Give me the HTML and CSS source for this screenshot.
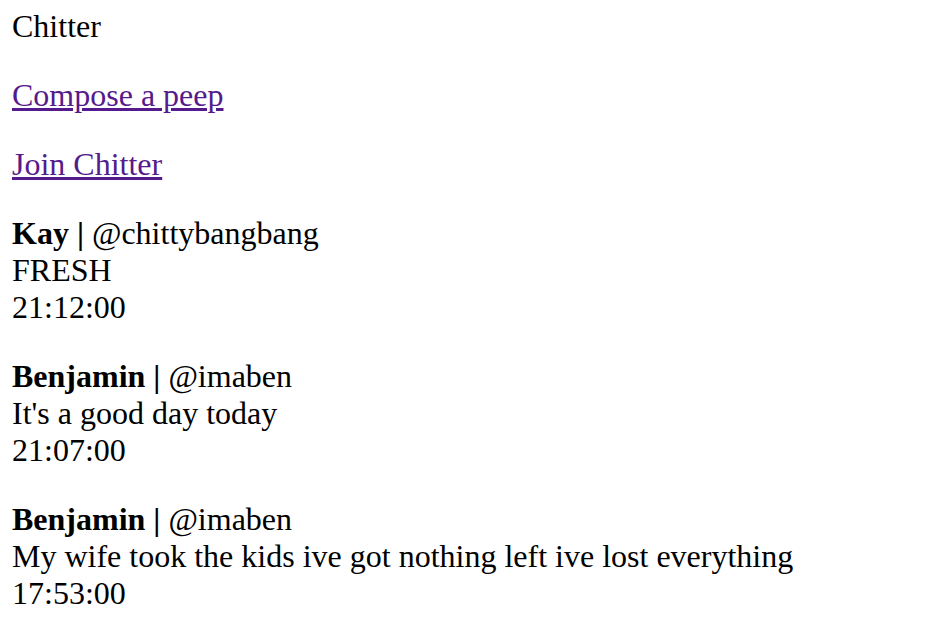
FILE: index.html
```html
<!DOCTYPE html>
<html>
<head>
<meta charset="utf-8">
<title>Chitter</title>
<link rel="stylesheet" href="styles.css">
</head>
<body>
<div class="page">
  <div class="title">Chitter</div>
  <p class="block"><a class="link" href="#">Compose a peep</a></p>
  <p class="block"><a class="link" href="#">Join Chitter</a></p>
  <div class="peep">
    <div><b>Kay |</b> @chittybangbang</div>
    <div>FRESH</div>
    <div>21:12:00</div>
  </div>
  <div class="peep">
    <div><b>Benjamin |</b> @imaben</div>
    <div>It's a good day today</div>
    <div>21:07:00</div>
  </div>
  <div class="peep">
    <div><b>Benjamin |</b> @imaben</div>
    <div>My wife took the kids ive got nothing left ive lost everything</div>
    <div>17:53:00</div>
  </div>
</div>
</body>
</html>
```

FILE: styles.css
```css
html, body {
  margin: 0;
  padding: 0;
  background: #ffffff;
}
.page {
  padding: 8px 12px 0 12px;
  font-family: "Liberation Serif", "Times New Roman", serif;
  font-size: 32px;
  line-height: 37px;
  color: #000000;
}
.title {
  margin: 0;
}
.block {
  margin: 32px 0 0 0;
}
.link {
  color: #551a8b;
  text-decoration: underline;
}
.peep {
  margin-top: 32px;
}
.peep b {
  font-weight: bold;
}
```
